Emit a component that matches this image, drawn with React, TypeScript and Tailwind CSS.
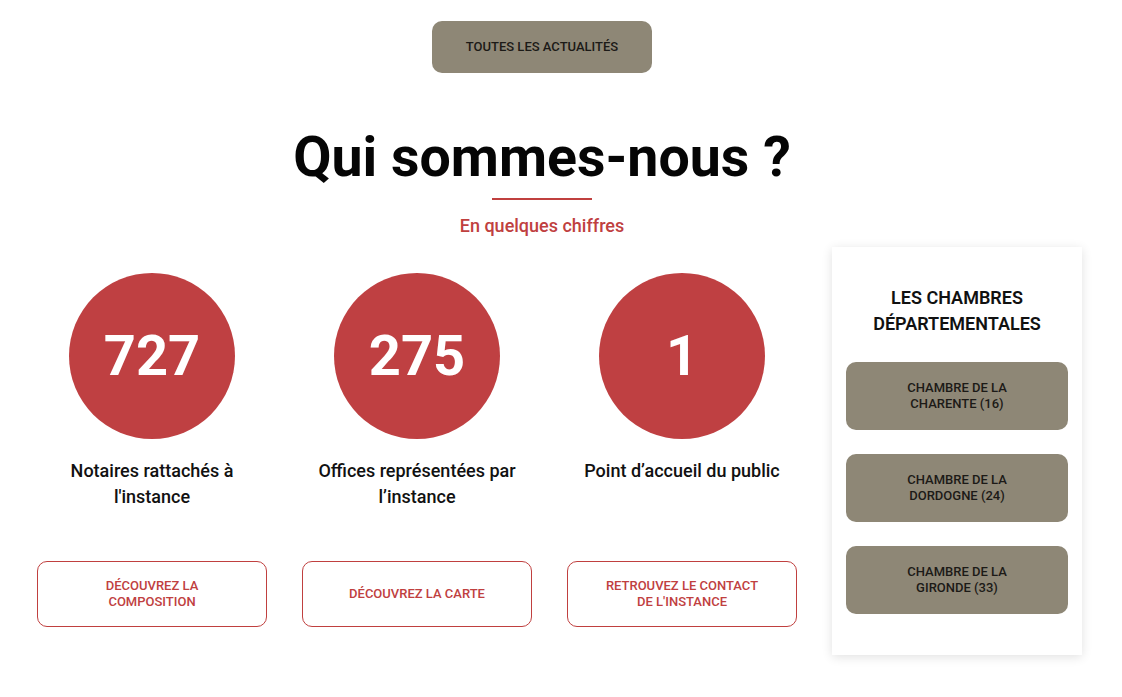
const stats = [
  { value: '727', label: ['Notaires rattachés à', "l'instance"], cta: ['DÉCOUVREZ LA', 'COMPOSITION'] },
  { value: '275', label: ['Offices représentées par', 'l’instance'], cta: ['DÉCOUVREZ LA CARTE'] },
  { value: '1', label: ['Point d’accueil du public'], cta: ['RETROUVEZ LE CONTACT', "DE L'INSTANCE"] },
];

const chambres = [
  ['CHAMBRE DE LA', 'CHARENTE (16)'],
  ['CHAMBRE DE LA', 'DORDOGNE (24)'],
  ['CHAMBRE DE LA', 'GIRONDE (33)'],
];

export default function App() {
  return (
    <div className="min-h-[697px] bg-white font-['Roboto',sans-serif]">
      <div className="w-[1084px] pt-[21px]">
        <a className="mx-auto flex h-[52px] w-[220px] items-center justify-center rounded-[10px] bg-[#8e8776] text-[13px] font-medium text-[#1c1a17]">
          TOUTES LES ACTUALITÉS
        </a>

        <h2 className="mt-[52px] text-center text-[55.5px] font-bold leading-[66px] text-[#050505]">Qui sommes-nous ?</h2>
        <div className="mx-auto mt-[7px] h-[2px] w-[100px] bg-[#c0403f]" />
        <p className="mt-[14px] text-center text-[18px] font-medium leading-[24px] text-[#c0403f]">En quelques chiffres</p>

        <div className="mt-[9px] flex pl-[37px]">
          <div className="grid grid-cols-[230px_230px_230px] gap-x-[35px]">
            {stats.map((s) => (
              <div key={s.value} className="flex flex-col items-center pt-[26px]">
                <div className="flex h-[166px] w-[166px] items-center justify-center rounded-full bg-[#bf4042] text-[56px] font-bold leading-none text-white">
                  {s.value}
                </div>
                <div className="mt-[19px] h-[52px] text-center text-[18px] font-medium leading-[26px] text-[#111]">
                  {s.label.map((l) => (
                    <div key={l}>{l}</div>
                  ))}
                </div>
                <a className="mt-[51px] flex h-[66px] w-[230px] flex-col items-center justify-center rounded-[10px] border border-[#c0403f] text-center text-[13px] font-medium leading-[16px] text-[#c0403f]">
                  {s.cta.map((c) => (
                    <span key={c}>{c}</span>
                  ))}
                </a>
              </div>
            ))}
          </div>

          <aside className="ml-[35px] h-[408px] w-[250px] bg-white px-[14px] pt-[38px] shadow-[0_2px_10px_rgba(0,0,0,0.12)]">
            <h3 className="text-center text-[18px] font-semibold leading-[26px] text-[#111]">
              LES CHAMBRES
              <br />
              DÉPARTEMENTALES
            </h3>
            <div className="mt-[25px] flex flex-col gap-[24px]">
              {chambres.map((c) => (
                <a
                  key={c[1]}
                  className="flex h-[68px] flex-col items-center justify-center rounded-[10px] bg-[#8e8776] text-center text-[13px] font-medium leading-[16px] text-[#1c1a17]"
                >
                  <span>{c[0]}</span>
                  <span>{c[1]}</span>
                </a>
              ))}
            </div>
          </aside>
        </div>
      </div>
    </div>
  );
}
